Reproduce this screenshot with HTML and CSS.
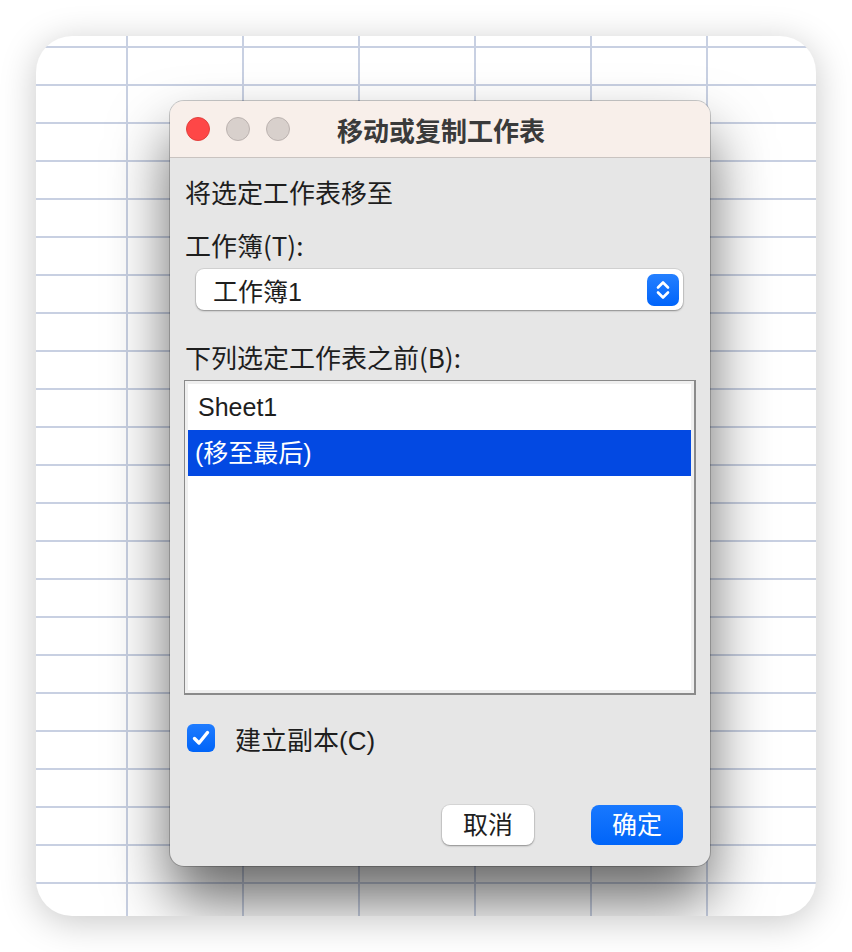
FILE: index.html
```html
<!DOCTYPE html>
<html>
<head>
	<meta charset="utf-8">
	<meta name="viewport" content="width=device-width, initial-scale=1">
	<title>移动或复制工作表</title>
	<link rel="stylesheet" href="styles.css">
</head>
<body>
	<div class="stage">
		<div class="sheet">

			<!-- Диалог -->
			<div class="dialog">
				<div class="titlebar">
					<div class="lights">
						<span class="light light-close"></span>
						<span class="light"></span>
						<span class="light"></span>
					</div>
					<div class="title">移动或复制工作表</div>
					<div></div>
				</div>

				<div class="dialog-body">
					<p class="label label-first">将选定工作表移至</p>
					<p class="label label-book">工作簿(T):</p>

					<div class="select">
						<span class="select-text">工作簿1</span>
						<span class="stepper">
							<svg width="18" height="24" viewBox="0 0 18 24">
								<path d="M4 9.5 L9 4.5 L14 9.5" fill="none" stroke="#fff" stroke-width="2.6" stroke-linecap="round" stroke-linejoin="round"/>
								<path d="M4 14.5 L9 19.5 L14 14.5" fill="none" stroke="#fff" stroke-width="2.6" stroke-linecap="round" stroke-linejoin="round"/>
							</svg>
						</span>
					</div>

					<p class="label label-list">下列选定工作表之前(B):</p>

					<div class="listbox">
						<div class="list-inner">
							<div class="list-row">Sheet1</div>
							<div class="list-row selected">(移至最后)</div>
						</div>
					</div>

					<label class="check-row">
						<span class="checkbox">
							<svg width="24" height="24" viewBox="0 0 24 24">
								<path d="M5.5 12.5 L10 17 L18.5 6.5" fill="none" stroke="#fff" stroke-width="3.4" stroke-linecap="round" stroke-linejoin="round"/>
							</svg>
						</span>
						<span class="check-label">建立副本(C)</span>
					</label>

					<div class="buttons">
						<button class="btn btn-cancel">取消</button>
						<button class="btn btn-ok">确定</button>
					</div>
				</div>
			</div>

		</div>
	</div>
</body>
</html>
```

FILE: styles.css
```css
* {
	box-sizing: border-box;
}

body {
	margin: 0;
	background: #fff;
	font-family: "Liberation Sans", "Noto Sans CJK SC", sans-serif;
	color: #1e1e1e;
}

.stage {
	padding: 36px;
	width: 852px;
	height: 952px;
}

/* Sheet with grid */
.sheet {
	width: 780px;
	height: 880px;
	border-radius: 36px;
	overflow: hidden;
	background-color: #fff;
	background-image:
		linear-gradient(to right, #c8d0e2 2px, transparent 2px),
		linear-gradient(to bottom, #c8d0e2 2px, transparent 2px);
	background-size: 116px 100%, 100% 38px;
	background-position: 90px 0, 0 10px;
	background-repeat: repeat-x, repeat-y;
	box-shadow: 0 6px 36px rgba(0, 0, 0, 0.22);
	padding: 65px 0 0 134px;
}

/* Dialog */
.dialog {
	width: 540px;
	height: 765px;
	border-radius: 14px;
	background: #e6e6e6;
	overflow: hidden;
	box-shadow: 0 0 0 1px rgba(0, 0, 0, 0.2), 0 34px 60px rgba(0, 0, 0, 0.6);
}

.titlebar {
	height: 57px;
	background: #f8efea;
	border-bottom: 1px solid #c9c3c0;
	display: grid;
	grid-template-columns: 1fr auto 1fr;
	align-items: center;
}

.lights {
	display: flex;
	gap: 16px;
	padding-left: 16px;
}

.light {
	width: 24px;
	height: 24px;
	border-radius: 50%;
	background: #d8d0cc;
	border: 1px solid #bcb3b0;
}

.light-close {
	background: #fe4747;
	border-color: #e2403c;
}

.title {
	font-family: "Noto Sans CJK SC", sans-serif;
	font-weight: bold;
	font-size: 26px;
	color: #3a3a3a;
	padding-left: 2px;
}

.dialog-body {
	padding: 17px 27px 0 15px;
}

.label {
	margin: 0;
	font-size: 26px;
	line-height: 34px;
	font-family: "Noto Sans CJK SC", sans-serif;
}

.label-book {
	margin-top: 19px;
}

.label-list {
	margin-top: 30px;
}

/* Select */
.select {
	margin: 7px 0 0 11px;
	height: 41px;
	background: #fff;
	border-radius: 8px;
	box-shadow: 0 0 0 1px rgba(0, 0, 0, 0.08), 0 1px 2px rgba(0, 0, 0, 0.35);
	display: flex;
	align-items: center;
	justify-content: space-between;
	padding: 0 4px 0 17px;
}

.select-text {
	font-size: 25px;
}

.stepper {
	width: 32px;
	height: 32px;
	border-radius: 7px;
	background: linear-gradient(#2580ff, #0064fa);
	display: flex;
	align-items: center;
	justify-content: center;
}

/* List */
.listbox {
	margin: 6px -13px 0 -1px;
	height: 315px;
	border: 1px solid #8a8a8a;
	border-right-width: 2px;
	border-bottom-width: 2px;
	background: #efefef;
	padding: 3px;
}

.list-inner {
	height: 100%;
	background: #fff;
}

.list-row {
	height: 46px;
	line-height: 46px;
	padding-left: 10px;
	font-size: 25px;
}

.selected {
	background: #0349e2;
	color: #fff;
	padding-left: 7px;
}

/* Checkbox */
.check-row {
	display: flex;
	align-items: center;
	margin: 29px 0 0 2px;
	height: 28px;
}

.checkbox {
	width: 28px;
	height: 28px;
	border-radius: 6px;
	background: linear-gradient(#1f7cff, #0064f8);
	display: flex;
	align-items: center;
	justify-content: center;
}

.check-label {
	margin-left: 20px;
	font-size: 26px;
}

/* Buttons */
.buttons {
	display: flex;
	justify-content: flex-end;
	gap: 57px;
	margin-top: 53px;
}

.btn {
	width: 92px;
	height: 40px;
	border: none;
	border-radius: 8px;
	font-size: 25px;
	font-family: "Noto Sans CJK SC", sans-serif;
	padding: 0 0 6px;
}

.btn-cancel {
	background: #fff;
	color: #1e1e1e;
	box-shadow: 0 0 0 1px rgba(0, 0, 0, 0.06), 0 1px 2px rgba(0, 0, 0, 0.35);
}

.btn-ok {
	background: linear-gradient(#1878ff, #0064f8);
	color: #fff;
}
```
